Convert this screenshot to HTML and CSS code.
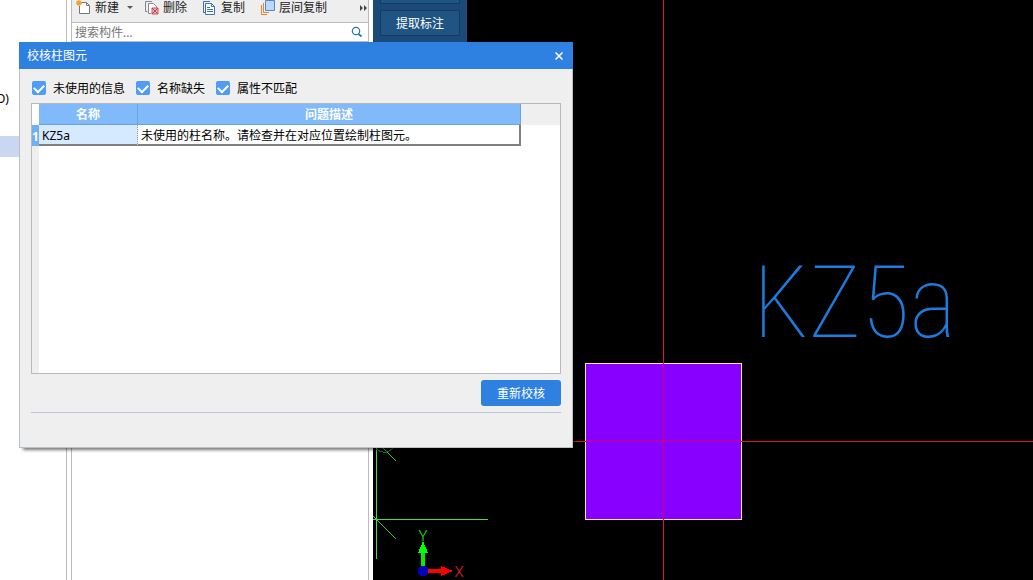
FILE: index.html
```html
<!DOCTYPE html>
<html lang="zh-CN">
<head>
<meta charset="utf-8">
<title>校核柱图元</title>
<link rel="stylesheet" href="styles.css">
</head>
<body>
<div class="workspace">
  <aside class="tree">
    <span class="tree-label">O)</span>
    <span class="tree-selected"></span>
  </aside>
  <section class="components">
    <div class="toolbar">
      <button class="tool tool-new" type="button">
        <svg width="16" height="16" viewBox="0 0 16 16" fill="none"><path d="M4.500 2.500H10.500L13.500 5.500V13.500H3.500V6" fill="#fff" stroke="#777"/><path d="M10.500 2.500V5.500H13.500" stroke="#777"/><path d="M1 1L5 5M5 1L1 5M3 0V6M0 3H6" stroke="#f5a02c" stroke-width="1.300"/></svg>
        新建
      </button>
      <button class="tool tool-more" type="button" aria-label="更多新建"><svg width="6" height="4" viewBox="0 0 6 4"><path d="M0 0H6L3 3Z" fill="#555"/></svg></button>
      <button class="tool tool-delete" type="button">
        <svg width="16" height="16" viewBox="0 0 16 16" fill="none"><path d="M3.500 11.500H1.500V1.500H8" stroke="#888"/><path d="M7 13.500H4.500V3.500H9.500L12.500 6.500V8" fill="#fff" stroke="#888"/><path d="M8 8H14V14H8Z" fill="#eeb5bb" stroke="#c95462"/><path d="M8 8L14 14M14 8L8 14" stroke="#c93f50"/></svg>
        删除
      </button>
      <button class="tool tool-copy" type="button">
        <svg width="14" height="16" viewBox="0 0 14 16" fill="none"><path d="M3 12.500H1.500V1.500H8" stroke="#3e75b5"/><path d="M3.500 3.500H9.500L12.500 6.500V14.500H3.500Z" fill="#fff" stroke="#3e75b5"/><path d="M9.500 3.500V6.500H12.500M5 7.500H8M5 9.500H11M5 11.500H11" stroke="#3e75b5"/></svg>
        复制
      </button>
      <button class="tool tool-layer" type="button">
        <svg width="16" height="16" viewBox="0 0 16 16" fill="none"><path d="M1.500 5V14.500H7M3.500 3V12.500H9" stroke="#ed852d"/><path d="M5.500 0.500H14.500V10.500H5.500Z" fill="#b8d8ff" stroke="#5b86bd"/></svg>
        层间复制
      </button>
      <button class="tool tool-overflow" type="button" aria-label="展开工具栏"><svg width="8" height="6" viewBox="0 0 8 6"><path d="M0 0L3 3L0 6ZM4 0L7 3L4 6Z" fill="#444"/></svg></button>
    </div>
    <div class="search">
      <input class="search-input" type="text" placeholder="搜索构件..." aria-label="搜索构件">
      <svg class="search-icon" width="12" height="12" viewBox="0 0 12 12" fill="none" stroke="#2379b5"><circle cx="5" cy="5" r="3.700" stroke-width="1.200"/><path d="M7.500 8L10.500 10.500" stroke-width="1.800"/></svg>
    </div>
  </section>
  <main class="canvas">
    <svg class="drawing" fill="none" shape-rendering="crispEdges">
      <rect x="212.500" y="363.500" width="156" height="156" fill="#8800ff" stroke="#ffe59a"/>
      <path d="M290.500 0V2000M200 441.500H3000" stroke="#e81428"/>
      <path d="M290.500 364V519M213 441.500H368" stroke="#cc0068"/>
      <path d="M3.500 448V559M0 519.500H115" stroke="#43e043"/>
      <path d="M0 516L23 539M10 448L23 461" stroke="#43c843"/>
      <path d="M3 449Q12 456 20 448" stroke="#1c6a26"/>
      <path d="M50 566V552" stroke="#00f000" stroke-width="4"/>
      <path d="M45 553L50 541L55 553Z" fill="#00ff00"/>
      <path d="M55 571H69" stroke="#f00" stroke-width="4"/>
      <path d="M68 566L80 571L68 576Z" fill="#f00"/>
      <circle cx="50" cy="571" r="5.500" fill="#0000b8"/>
      <text class="axis axis-y" x="50" y="541">Y</text>
      <text class="axis axis-x" x="86" y="577">X</text>
      <text class="column-label" x="380" y="337">KZ5a</text>
    </svg>
    <div class="palette">
      <span class="palette-previous"></span>
      <button class="palette-button" type="button">提取标注</button>
    </div>
  </main>
</div>
<div class="dialog" role="dialog" aria-labelledby="dialog-title">
  <header class="dialog-header">
    <h1 class="dialog-title" id="dialog-title">校核柱图元</h1>
    <button class="close" type="button" aria-label="关闭"><svg width="8" height="8" viewBox="0 0 8 8" stroke="#fff" stroke-width="1.500"><path d="M0.500 0.500L7.500 7.500M7.500 0.500L0.500 7.500"/></svg></button>
  </header>
  <div class="dialog-body">
    <div class="filters">
      <label class="filter"><input class="check" type="checkbox" checked><span class="filter-text">未使用的信息</span></label>
      <label class="filter"><input class="check" type="checkbox" checked><span class="filter-text">名称缺失</span></label>
      <label class="filter"><input class="check" type="checkbox" checked><span class="filter-text">属性不匹配</span></label>
    </div>
    <div class="results">
      <table class="table">
        <thead><tr><td class="corner"></td><th class="name-column">名称</th><th>问题描述</th><td class="filler"></td></tr></thead>
        <tbody><tr><th class="row-number">1</th><td class="name-cell">KZ5a</td><td class="issue-cell">未使用的柱名称。请检查并在对应位置绘制柱图元。</td><td></td></tr></tbody>
      </table>
      <div class="row-gutter"></div>
    </div>
    <div class="actions"><button class="recheck" type="button">重新校核</button></div>
  </div>
</div>
</body>
</html>
```

FILE: styles.css
```css
* { box-sizing: border-box; }
body {
  margin: 0;
  overflow: hidden;
  font: 12px/16px "Noto Sans", "Noto Sans CJK SC", sans-serif;
  color: #000;
  background: #fff;
}
button, input { font: inherit; color: inherit; }
button { padding: 0; border: 0; background: none; }
svg { flex: none; }

.workspace { display: flex; height: 100vh; }
.tree {
  flex: none;
  width: 67px;
  padding-top: 91px;
  border-right: 1px solid #b9bbbd;
}
.tree-label { display: block; margin-left: -4px; }
.tree-selected { display: block; height: 21px; margin-top: 29px; background: #c9d8f0; }
.components {
  flex: none;
  width: 298px;
  margin: 0 4px;
  border: solid #b9bbbd;
  border-width: 0 1px;
}
.toolbar {
  display: flex;
  align-items: center;
  height: 22px;
  padding: 0 0 6px 4px;
  background: #eee;
}
.tool { display: flex; align-items: center; gap: 3px; color: #222; white-space: nowrap; }
.tool-more { margin-left: 8px; }
.tool-delete { margin-left: 11px; }
.tool-copy { margin-left: 15px; gap: 5px; }
.tool-layer { margin-left: 15px; }
.tool-overflow { margin: 0 0 0 auto; }
.search {
  display: flex;
  align-items: center;
  height: 20px;
  padding: 0 5px 0 3px;
  border: solid #b9bbbd;
  border-width: 1px 0;
}
.search-input { flex: 1; min-width: 0; padding: 2px 0 0; border: 0; outline: 0; background: none; }
.search-input::placeholder { color: #777; opacity: 1; }

.canvas { position: relative; flex: 1; overflow: hidden; background: #000; }
.drawing { position: absolute; inset: 0; width: 100%; height: 100%; }
.axis { font: 300 15px Roboto, sans-serif; text-anchor: middle; }
.axis-y { fill: #22ef22; }
.axis-x { fill: #f02030; }
.column-label {
  font: 100 100px "Roboto Condensed Thin", "Roboto Condensed", Roboto, sans-serif;
  fill: #1c7bdc;
}
.palette {
  position: relative;
  display: flex;
  flex-direction: column;
  gap: 6px;
  width: 94px;
  height: 43px;
  padding: 0 7px;
  background: #1c4a78;
}
.palette-previous { height: 4px; border: 1px solid #123a62; border-top: 0; background: #205483; }
.palette-button { height: 26px; padding-top: 2px; border: 1px solid #123a62; border-radius: 2px; background: #205483; color: #fff; }

.dialog {
  position: absolute;
  top: 42px;
  left: 19px;
  width: 554px;
  border: 1px solid #b9c0c8;
  border-top: 0;
  background: #efefef;
  box-shadow: 3px 3px 3px -1px #0008;
}
.dialog-header {
  display: flex;
  align-items: center;
  justify-content: space-between;
  height: 27px;
  margin: 0 -1px;
  padding: 0 10px 0 8px;
  background: #2e80e1;
  color: #fff;
}
.dialog-title { margin: 0; font-size: 12px; font-weight: 400; }
.close { display: flex; }
.dialog-body { padding: 11px 11px 34px; }
.filters { display: flex; gap: 11px; height: 23px; padding-left: 1px; }
.filter { display: flex; align-items: center; gap: 7px; height: 16px; }
.filter-text { padding-top: 2px; }
.check {
  appearance: none;
  width: 14px;
  height: 14px;
  margin: 0;
  border-radius: 2px;
  background: #4f9bf5;
  display: grid;
  place-items: center;
}
.check:checked::before {
  content: "";
  width: 8px;
  height: 5px;
  margin-bottom: 2px;
  border: solid #fff;
  border-width: 0 0 2px 2px;
  transform: rotate(-45deg);
}
.results { display: flex; flex-direction: column; height: 271px; border: 1px solid #b9b9b9; background: #fff; }
.table { width: 100%; border-collapse: separate; border-spacing: 0; table-layout: fixed; }
.table th, .table td { height: 21px; padding: 2px 0 0; line-height: 16px; }
.table thead th { background: #80bafa; color: #fff; border: solid #6ca4e2; border-width: 0 1px 1px 0; }
.table .corner { width: 7px; background: #fff; }
.table .name-column { width: 99px; }
.table .filler { width: 39px; background: #efefef; }
.table .row-number { background: #70aff2; color: #fff; }
.table .name-cell { padding-left: 3px; background: #d5e9ff; border-right: 1px dotted #999; border-bottom: 2px solid #808080; }
.table .issue-cell { padding-left: 3px; border-right: 2px solid #808080; border-bottom: 2px solid #808080; }
.row-gutter { flex: 1; width: 7px; background: #efefef; }
.actions { display: flex; justify-content: flex-end; padding: 6px 0; border-bottom: 1px solid #bdc5d0; }
.recheck { width: 80px; height: 26px; padding-top: 2px; border-radius: 3px; background: #2e80e1; color: #fff; }
```
